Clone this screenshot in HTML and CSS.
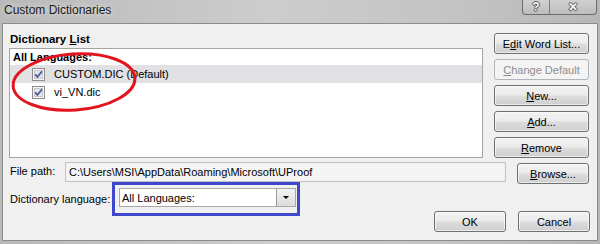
FILE: index.html
```html
<!DOCTYPE html>
<html lang="en">
<head>
  <meta charset="UTF-8" />
  <title>Custom Dictionaries</title>
  <link rel="stylesheet" href="styles.css">
</head>
<body>
  <div class="window">
    <div class="titlebar">
      <span class="title">Custom Dictionaries</span>
      <div class="caption-buttons">
        <span class="cap help">?</span>
        <span class="cap close">✕</span>
      </div>
    </div>

    <div class="client">
      <div class="main-row">
        <div class="list-col">
          <div class="group-label">Dictionary <u>L</u>ist</div>
          <div class="listbox">
            <div class="list-head">All Languages:</div>
            <div class="list-item selected">
              <svg class="check" width="13" height="13" viewBox="0 0 13 13">
                <rect x="0.5" y="0.5" width="12" height="12" fill="#f4f4f4" stroke="#8f8f8f"/>
                <rect x="2.5" y="2.5" width="8" height="8" fill="#e4e4e6" stroke="#c8c8cc"/>
                <path d="M3.2 6.4 L5.4 9 L10 3.2" fill="none" stroke="#3d5a9a" stroke-width="1.7"/>
              </svg>
              <span>CUSTOM.DIC (Default)</span>
            </div>
            <div class="list-item">
              <svg class="check" width="13" height="13" viewBox="0 0 13 13">
                <rect x="0.5" y="0.5" width="12" height="12" fill="#f4f4f4" stroke="#8f8f8f"/>
                <rect x="2.5" y="2.5" width="8" height="8" fill="#e4e4e6" stroke="#c8c8cc"/>
                <path d="M3.2 6.4 L5.4 9 L10 3.2" fill="none" stroke="#3d5a9a" stroke-width="1.7"/>
              </svg>
              <span>vi_VN.dic</span>
            </div>
          </div>
        </div>
        <div class="side-buttons">
          <button>E<u>d</u>it Word List...</button>
          <button disabled><u>C</u>hange Default</button>
          <button><u>N</u>ew...</button>
          <button><u>A</u>dd...</button>
          <button><u>R</u>emove</button>
        </div>
      </div>

      <div class="path-row">
        <span class="field-label path-label">File path:</span>
        <div class="path-box">C:\Users\MSI\AppData\Roaming\Microsoft\UProof</div>
        <button class="browse"><u>B</u>rowse...</button>
      </div>

      <div class="bottom-row">
        <div class="lang-field">
          <span class="field-label lang-label">Dictionary language:</span>
          <div class="highlight-box">
            <div class="combo">
              <span class="combo-text">All Languages:</span>
              <span class="combo-arrow"></span>
            </div>
          </div>
        </div>
        <div class="actions">
          <button>OK</button>
          <button>Cancel</button>
        </div>
      </div>
    </div>

    <!-- hand-drawn red circle over the list -->
    <svg class="annotation" width="600" height="244">
      <ellipse cx="74" cy="82" rx="61" ry="28" transform="rotate(-4 74 82)"
               fill="none" stroke="#e3141e" stroke-width="3"/>
    </svg>
  </div>
</body>
</html>
```

FILE: styles.css
```css
* {
  margin: 0;
  padding: 0;
  box-sizing: border-box;
  font-family: 'Liberation Sans', Arial, sans-serif;
}

body {
  background: #c2c2c2;
}

.window {
  position: relative;
  width: 600px;
  height: 244px;
  background: linear-gradient(to right, #b9b9b9, #cdcdcd 45%, #c4c4c4 75%, #b7b7b7);
  overflow: hidden;
}

.titlebar {
  height: 23px;
  display: flex;
  align-items: flex-start;
}

.title {
  font-size: 12px;
  padding: 3px 0 0 4px;
  color: #1a1a1a;
  text-shadow: 0 0 6px rgba(255, 255, 255, 0.8);
}

.caption-buttons {
  margin-left: auto;
  margin-right: 3px;
  display: flex;
  height: 16px;
  margin-top: -1px;
  border: 1px solid #6c6c6c;
  border-top: none;
  border-radius: 0 0 4px 4px;
  overflow: hidden;
  background: linear-gradient(#d2d2d2, #bdbdbd);
}

.cap {
  display: flex;
  justify-content: center;
  align-items: center;
  color: #f6f6f6;
  font-size: 12px;
  font-weight: bold;
  text-shadow: 1px 0 0 #555, -1px 0 0 #555, 0 1px 0 #555, 0 -1px 0 #555;
}

.help {
  width: 27px;
  border-right: 1px solid #7c7c7c;
}

.close {
  width: 46px;
}

.client {
  margin: 0 2px 0 2px;
  height: 218px;
  border: 1px solid #8c8c8c;
  background: #f0f0f0;
  padding: 9px 7px 0 6px;
}

.main-row {
  display: flex;
  gap: 11px;
  height: 125px;
}

.list-col {
  width: 474px;
  display: flex;
  flex-direction: column;
}

.group-label {
  height: 15px;
  padding-left: 1px;
  font-size: 11.5px;
  font-weight: bold;
}

.listbox {
  flex: 1;
  background: white;
  border: 1px solid #a4a4a4;
  font-size: 11px;
}

.list-head {
  height: 16px;
  padding: 2px 0 0 3px;
  font-weight: bold;
}

.list-item {
  height: 18px;
  display: flex;
  align-items: center;
  padding-left: 22px;
}

.list-item.selected {
  background: #e0e0e5;
}

.check {
  margin-right: 9px;
  flex-shrink: 0;
}

.side-buttons {
  width: 95px;
  display: flex;
  flex-direction: column;
  gap: 5px;
}

button {
  height: 21px;
  font-size: 11px;
  color: #000;
  border: 1px solid #707070;
  border-radius: 3px;
  background: linear-gradient(#f3f3f3, #ebebeb 48%, #dddddd 52%, #cfcfcf);
  box-shadow: inset 0 0 0 1px rgba(255, 255, 255, 0.6);
}

button:disabled {
  color: #8d8d8d;
  border-color: #b2b5b9;
  background: #f4f4f4;
  box-shadow: none;
}

.path-row {
  display: flex;
  align-items: flex-start;
  height: 20px;
  margin-top: 4px;
}

.field-label {
  font-size: 11px;
  padding-left: 1px;
}

.path-label {
  width: 56px;
  padding-top: 3px;
}

.path-box {
  width: 441px;
  height: 20px;
  border: 1px solid #c2c2c2;
  background: #f4f4f4;
  font-size: 11px;
  padding: 3px 0 0 3px;
  white-space: nowrap;
}

.browse {
  width: 72px;
  margin: 1px 0 0 11px;
}

.bottom-row {
  display: flex;
  height: 50px;
}

.lang-field {
  display: flex;
  align-items: center;
  align-self: flex-start;
}

.lang-label {
  width: 103px;
}

.highlight-box {
  width: 188px;
  height: 34px;
  border: 3px solid #3f48cc;
  padding: 3px 1px 0 4px;
}

.combo {
  height: 19px;
  border: 1px solid #a8a8a8;
  background: white;
  display: flex;
  align-items: center;
}

.combo-text {
  flex: 1;
  font-size: 11px;
  padding-left: 2px;
}

.combo-arrow {
  width: 19px;
  height: 17px;
  border-left: 1px solid #9a9a9a;
  background: linear-gradient(#f2f2f2, #dcdcdc);
  display: flex;
  justify-content: center;
  align-items: center;
}

.combo-arrow::after {
  content: "";
  border-left: 3px solid transparent;
  border-right: 3px solid transparent;
  border-top: 3px solid #000;
}

.actions {
  margin-left: auto;
  align-self: flex-end;
  display: flex;
  gap: 12px;
}

.actions button {
  width: 72px;
}

.annotation {
  position: absolute;
  left: 0;
  top: 0;
  pointer-events: none;
}
```
